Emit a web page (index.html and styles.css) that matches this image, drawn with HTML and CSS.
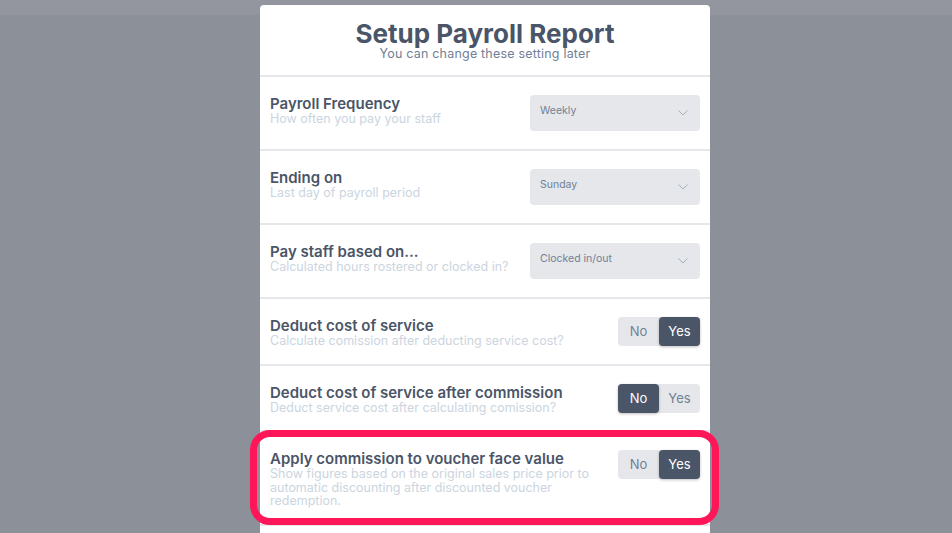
FILE: index.html
```html
<!DOCTYPE html>
<html lang="en">
<head>
  <meta charset="UTF-8" />
  <title>Setup Payroll Report</title>
  <link rel="stylesheet" href="styles.css">
</head>
<body>

  <div class="setup-card">
    <div class="setup-header">
      <h2>Setup Payroll Report</h2>
      <p>You can change these setting later</p>
    </div>

    <div class="setting-row">
      <div class="setting-text">
        <div class="setting-title">Payroll Frequency</div>
        <div class="setting-hint">How often you pay your staff</div>
      </div>
      <div class="select-box">
        <span>Weekly</span>
        <svg class="chevron" viewBox="0 0 10 6" width="10" height="6"><path d="M0.5 0.5 L5 5 L9.5 0.5" /></svg>
      </div>
    </div>

    <div class="setting-row">
      <div class="setting-text">
        <div class="setting-title">Ending on</div>
        <div class="setting-hint">Last day of payroll period</div>
      </div>
      <div class="select-box">
        <span>Sunday</span>
        <svg class="chevron" viewBox="0 0 10 6" width="10" height="6"><path d="M0.5 0.5 L5 5 L9.5 0.5" /></svg>
      </div>
    </div>

    <div class="setting-row">
      <div class="setting-text">
        <div class="setting-title">Pay staff based on...</div>
        <div class="setting-hint">Calculated hours rostered or clocked in?</div>
      </div>
      <div class="select-box">
        <span>Clocked in/out</span>
        <svg class="chevron" viewBox="0 0 10 6" width="10" height="6"><path d="M0.5 0.5 L5 5 L9.5 0.5" /></svg>
      </div>
    </div>

    <div class="setting-row">
      <div class="setting-text">
        <div class="setting-title">Deduct cost of service</div>
        <div class="setting-hint">Calculate comission after deducting service cost?</div>
      </div>
      <div class="toggle">
        <span>No</span>
        <span class="active">Yes</span>
      </div>
    </div>

    <div class="setting-row">
      <div class="setting-text">
        <div class="setting-title">Deduct cost of service after commission</div>
        <div class="setting-hint">Deduct service cost after calculating comission?</div>
      </div>
      <div class="toggle">
        <span class="active">No</span>
        <span>Yes</span>
      </div>
    </div>

    <!-- highlighted row -->
    <div class="setting-row highlight">
      <div class="setting-text">
        <div class="setting-title">Apply commission to voucher face value</div>
        <div class="setting-hint">Show figures based on the original sales price prior to automatic discounting after discounted voucher redemption.</div>
      </div>
      <div class="toggle">
        <span>No</span>
        <span class="active">Yes</span>
      </div>
    </div>

    <div class="setting-row"></div>
  </div>

</body>
</html>
```

FILE: styles.css
```css
body {
  margin: 0;
  height: 533px;
  overflow: hidden;
  font-family: 'Inter', 'DejaVu Sans', sans-serif;
  background: linear-gradient(#93969e 0 15px, #8c9098 15px);
}

.setup-card {
  width: 450px;
  margin: 5px 0 0 260px;
  background-color: #ffffff;
  border-radius: 4px 4px 0 0;
}

.setup-header {
  text-align: center;
  padding: 15px 0 15px;
  border-bottom: 2px solid #e5e7eb;
}

h2 {
  margin: 0;
  font-size: 26px;
  line-height: 27px;
  font-weight: 700;
  color: #4a5568;
}

.setup-header p {
  margin: 0;
  font-size: 12.5px;
  line-height: 13px;
  letter-spacing: 0.2px;
  color: #718096;
}

.setting-row {
  display: flex;
  justify-content: space-between;
  align-items: flex-start;
  gap: 20px;
  padding: 18px 10px 16px;
  border-bottom: 2px solid #e5e7eb;
}

.setting-text {
  flex: 1;
  padding-top: 1px;
}

.setting-title {
  font-size: 15px;
  line-height: 16px;
  font-weight: 600;
  color: #4a5568;
}

.setting-hint {
  font-size: 12.5px;
  line-height: 13.5px;
  color: #cbd5e0;
}

.select-box {
  width: 170px;
  height: 36px;
  margin-bottom: 2px;
  box-sizing: border-box;
  padding: 9px 12px 0 10px;
  display: flex;
  justify-content: space-between;
  align-items: flex-start;
  background-color: #e5e7eb;
  border-radius: 4px;
  font-size: 10.5px;
  color: #718096;
}

.chevron {
  margin-top: 6px;
  fill: none;
  stroke: #a0aec0;
  stroke-width: 1;
}

.toggle {
  display: flex;
  background-color: #e5e7eb;
  border-radius: 4px;
}

.toggle span {
  width: 41px;
  height: 29px;
  line-height: 29px;
  text-align: center;
  font-size: 13px;
  color: #718096;
  border-radius: 4px;
}

.toggle span.active {
  background-color: #4a5568;
  color: #ffffff;
  box-shadow: 0 1px 3px rgba(0, 0, 0, 0.25);
}

.highlight {
  position: relative;
}

.highlight::after {
  content: '';
  position: absolute;
  left: -10px;
  right: -9px;
  top: -2px;
  bottom: -1px;
  border: 7px solid #ff1659;
  border-radius: 20px;
}
```
